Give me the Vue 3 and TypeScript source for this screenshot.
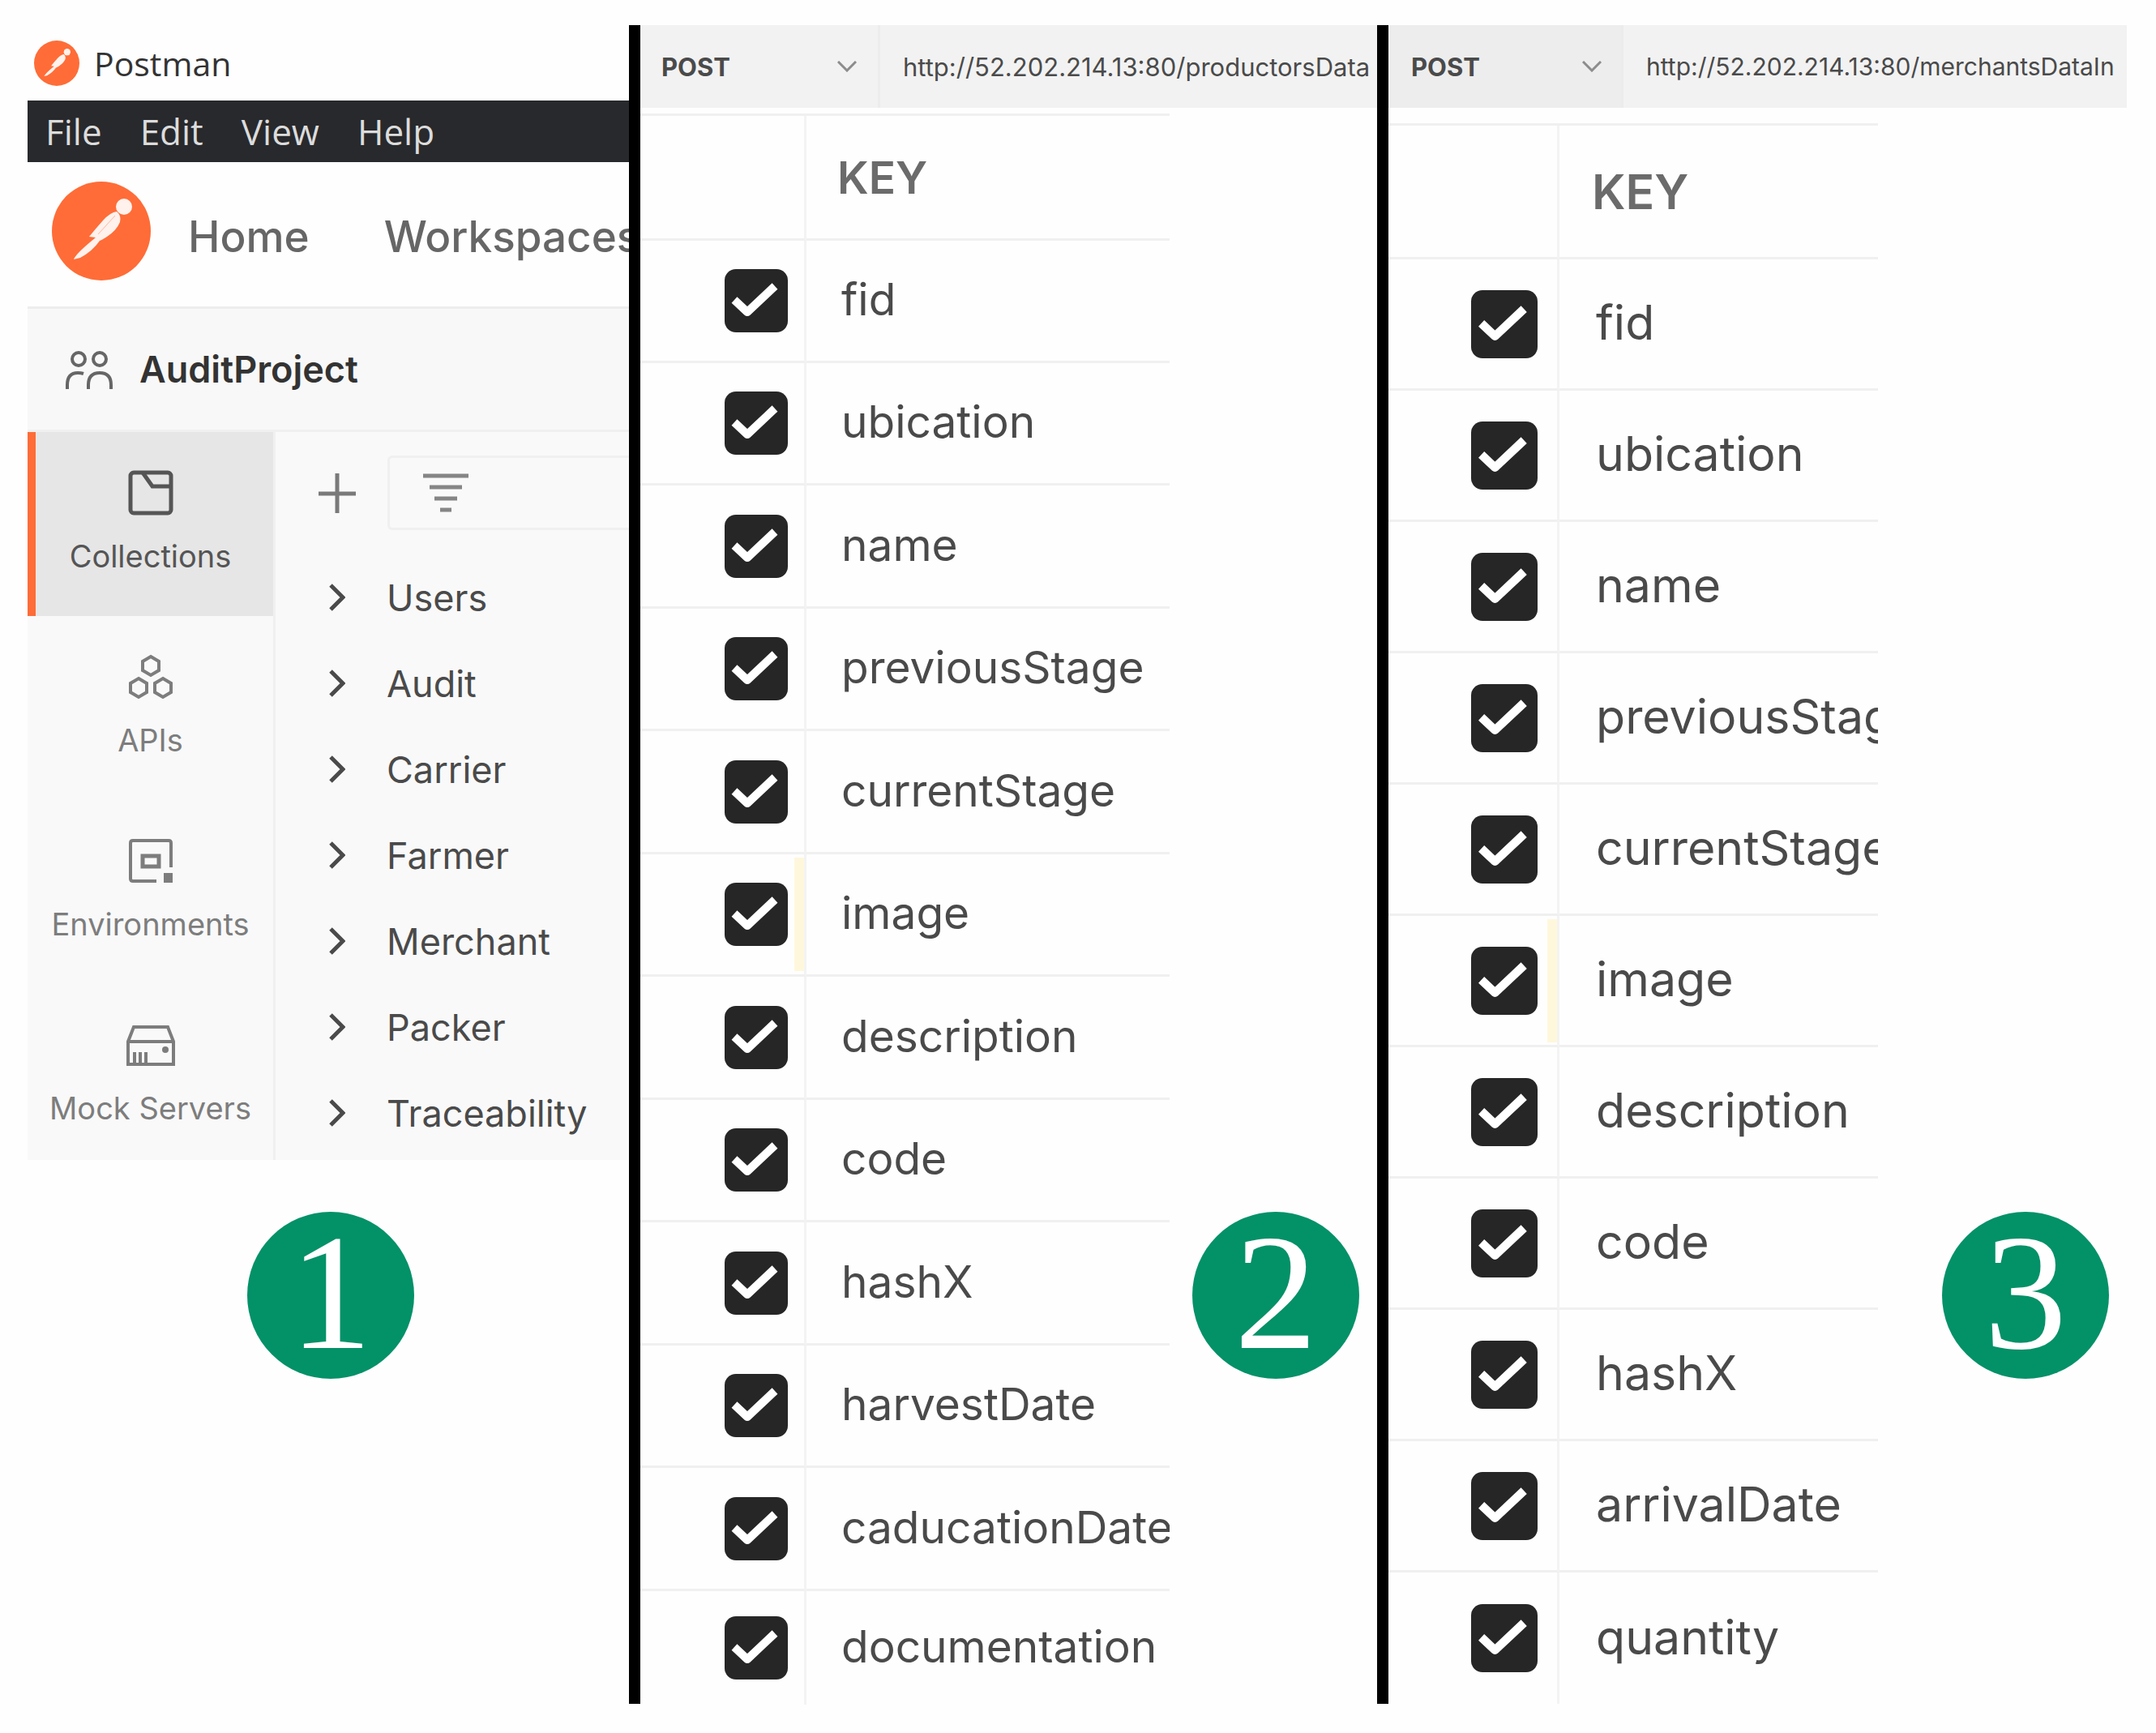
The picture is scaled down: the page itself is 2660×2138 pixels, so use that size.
<script setup lang="ts">
interface Item {
  label: string
  icon: string
}
interface Request {
  id: string
  method: string
  url: string
  step: number
  rows: string[]
}

const menus: string[] = ['File', 'Edit', 'View', 'Help']
const tabs: Item[] = [
  { label: 'Collections', icon: 'collections' },
  { label: 'APIs', icon: 'apis' },
  { label: 'Environments', icon: 'environments' },
  { label: 'Mock Servers', icon: 'mock' },
]
const collections: string[] = ['Users', 'Audit', 'Carrier', 'Farmer', 'Merchant', 'Packer', 'Traceability']
const requests: Request[] = [
  {
    id: 'productors',
    method: 'POST',
    url: 'http://52.202.214.13:80/productorsData',
    step: 2,
    rows: ['fid', 'ubication', 'name', 'previousStage', 'currentStage', 'image', 'description', 'code', 'hashX', 'harvestDate', 'caducationDate', 'documentation'],
  },
  {
    id: 'merchants',
    method: 'POST',
    url: 'http://52.202.214.13:80/merchantsDataIn',
    step: 3,
    rows: ['fid', 'ubication', 'name', 'previousStage', 'currentStage', 'image', 'description', 'code', 'hashX', 'arrivalDate', 'quantity'],
  },
]
</script>

<template>
  <main class="page">
    <section class="workspace">
      <div class="app">
        <header class="titlebar">
          <svg class="logo-small" viewBox="0 0 122 122" aria-hidden="true">
            <circle cx="61" cy="61" r="61" fill="#ff6c37" />
            <path d="M27 96Q29 90 48 74L54 69 46 68Q54 58 63 48 72 38 80 37 86 42 84 50 80 60 68 68 62 72 59 73 50 86 35 94Z" fill="#fff1ec" />
            <circle cx="89" cy="31" r="9" fill="#fff1ec" />
          </svg>
          <span>Postman</span>
        </header>
        <nav class="menubar">
          <button v-for="m in menus" :key="m" type="button">{{ m }}</button>
        </nav>
        <nav class="topnav">
          <svg class="logo" viewBox="0 0 122 122" aria-hidden="true">
            <circle cx="61" cy="61" r="61" fill="#ff6c37" />
            <path d="M27 96Q29 90 48 74L54 69 46 68Q54 58 63 48 72 38 80 37 86 42 84 50 80 60 68 68 62 72 59 73 50 86 35 94Z" fill="#fff1ec" />
            <path d="M57 65 78 42" stroke="#ffb79f" stroke-width="1" />
            <circle cx="89" cy="31" r="10" fill="#fff1ec" />
          </svg>
          <a href="#home">Home</a>
          <a href="#workspaces">Workspaces</a>
        </nav>
        <div class="project">
          <svg class="people" viewBox="0 0 60 48" fill="none" stroke="#666" stroke-width="4" aria-hidden="true">
            <circle cx="17" cy="11" r="8" />
            <circle cx="43" cy="11" r="8" />
            <path d="M3 48V43Q3 28 16 28Q20 28 23 29M29 48V43Q29 28 43 28Q57 28 57 43V48" />
          </svg>
          <strong>AuditProject</strong>
        </div>
        <div class="body">
          <nav class="tabs">
            <button v-for="(t, i) in tabs" :key="t.label" type="button" class="tab" :class="{ active: i === 0 }">
              <svg viewBox="0 0 60 56" fill="none" stroke="currentColor" stroke-width="5" aria-hidden="true">
                <template v-if="t.icon === 'collections'">
                  <rect x="5" y="3" width="50" height="50" rx="4" />
                  <path d="M20 3 32 20H55" />
                </template>
                <template v-else-if="t.icon === 'apis'">
                  <path d="M30 3 40 9V20L30 26 20 20V9ZM15 30 25 36V47L15 53 5 47V36ZM45 30 55 36V47L45 53 35 47V36Z" stroke-width="4" />
                </template>
                <template v-else-if="t.icon === 'environments'">
                  <path d="M37 53H8Q5 53 5 50V6Q5 3 8 3H52Q55 3 55 6V36" stroke-width="4" />
                  <rect x="20" y="22" width="20" height="13" />
                  <rect x="46" y="43" width="11" height="12" fill="currentColor" stroke="none" />
                </template>
                <template v-else>
                  <path d="M2 24V52H58V24L51 6H9ZM2 24H58" stroke-width="4" />
                  <path d="M10 37V52M17 37V52M24 37V52" stroke-width="4" />
                  <circle cx="48" cy="34" r="4" fill="currentColor" stroke="none" />
                </template>
              </svg>
              <span>{{ t.label }}</span>
            </button>
          </nav>
          <div class="tree">
            <div class="tools">
              <button type="button" class="add" aria-label="Add">
                <svg viewBox="0 0 48 50" stroke="#7a7a7a" stroke-width="5" aria-hidden="true"><path d="M1 26H47M24 1V50" /></svg>
              </button>
              <button type="button" class="filter" aria-label="Filter">
                <svg viewBox="0 0 56 50" stroke="#858585" stroke-width="5" aria-hidden="true"><path d="M0 4H56M8 18H48M14 32H42M21 46H35" /></svg>
              </button>
            </div>
            <ul>
              <li v-for="c in collections" :key="c">
                <button type="button">
                  <svg viewBox="0 0 20 34" fill="none" stroke="#4a4a4a" stroke-width="5" aria-hidden="true"><path d="M2 2 17 17 2 32" /></svg>
                  <span>{{ c }}</span>
                </button>
              </li>
            </ul>
          </div>
        </div>
      </div>
      <div class="badge">1</div>
    </section>

    <template v-for="r in requests" :key="r.id">
      <div class="divider"></div>
      <section class="request" :class="r.id">
        <div class="bar">
          <label class="method">
            <select aria-label="Method">
              <option>{{ r.method }}</option>
            </select>
            <svg viewBox="0 0 24 14" fill="none" stroke="#8c8c8c" stroke-width="3" aria-hidden="true"><path d="M1 1 12 12 23 1" /></svg>
          </label>
          <input class="url" type="text" :value="r.url" aria-label="Request URL" />
        </div>
        <div class="params">
          <table>
            <thead>
              <tr>
                <th></th>
                <th>KEY</th>
              </tr>
            </thead>
            <tbody>
              <tr v-for="k in r.rows" :key="k" :class="{ marked: k === 'image' }">
                <td>
                  <div class="pick">
                    <span class="check">
                      <input :id="r.id + '-' + k" type="checkbox" checked />
                      <svg viewBox="0 0 78 78" fill="none" stroke="#fff" stroke-width="10" stroke-linejoin="round" aria-hidden="true"><path d="M12 38 28 53 62 21" /></svg>
                    </span>
                  </div>
                </td>
                <td><label :for="r.id + '-' + k">{{ k }}</label></td>
              </tr>
            </tbody>
          </table>
          <div class="badge">{{ r.step }}</div>
        </div>
      </section>
    </template>
  </main>
</template>

<style>
body {
  margin: 0;
  background: #fefefe;
}
</style>

<style scoped>
* {
  box-sizing: border-box;
}
.page {
  display: grid;
  grid-template-columns: 742fr 14px 909fr 14px 911fr;
  padding: 31px 36px 36px 34px;
  font-family: Inter, sans-serif;
  color: #4a4a4a;
}
button,
select,
input {
  margin: 0;
  padding: 0;
  border: 0;
  border-radius: 0;
  background: none;
  font: inherit;
  color: inherit;
}
svg {
  display: block;
  flex: none;
}
.divider {
  background: #000;
}
.workspace {
  min-width: 0;
}
.app {
  overflow: hidden;
}
.titlebar {
  display: flex;
  align-items: center;
  gap: 18px;
  height: 93px;
  padding: 0 8px;
  font: 41px/60px "Open Sans", sans-serif;
  color: #333;
}
.logo-small {
  width: 56px;
  height: 56px;
}
.menubar {
  display: flex;
  align-items: center;
  gap: 47px;
  height: 76px;
  padding: 0 22px;
  background: #28292c;
  font: 44px/60px "Open Sans", sans-serif;
  color: #dcdcdc;
}
.topnav {
  display: flex;
  align-items: center;
  gap: 92px;
  height: 181px;
  padding: 0 30px;
  border-bottom: 3px solid #ededed;
  font-size: 53px;
  font-weight: 500;
}
.topnav a {
  padding-top: 6px;
  color: #666;
  text-decoration: none;
}
.logo {
  width: 122px;
  height: 122px;
  margin: 0 -46px 8px 0;
}
.project {
  display: flex;
  align-items: center;
  gap: 32px;
  height: 152px;
  padding: 0 46px;
  background: #f8f8f8;
  border-bottom: 3px solid #f0f0f0;
  font-size: 45px;
  color: #333;
}
.project strong {
  font-weight: 600;
}
.people {
  width: 60px;
  height: 48px;
}
.body {
  display: flex;
  height: 898px;
  background: #f9f9f9;
}
.tabs {
  flex: none;
  width: 306px;
  border-right: 3px solid #f0f0f0;
}
.tab {
  display: flex;
  flex-direction: column;
  align-items: center;
  gap: 24px;
  width: 100%;
  height: 227px;
  padding-top: 47px;
  font-size: 38px;
  line-height: 52px;
  color: #7d7d7d;
}
.tab.active {
  background: #e6e6e6;
  box-shadow: inset 10px 0 #ff6c37;
  color: #555;
}
.tab svg {
  width: 60px;
  height: 56px;
}
.tree {
  flex: 1;
  min-width: 0;
  padding-top: 29px;
}
.tools {
  display: flex;
  gap: 38px;
  padding-left: 52px;
}
.add svg {
  width: 48px;
  height: 50px;
}
.filter {
  flex: 1;
  height: 92px;
  padding-left: 41px;
  border: 3px solid #f0f0f0;
  border-right: 0;
  border-radius: 6px 0 0 6px;
}
.filter svg {
  width: 56px;
  height: 50px;
}
.tree ul {
  margin: 30px 0 0;
  padding: 0;
  list-style: none;
}
.tree li button {
  display: flex;
  align-items: center;
  gap: 51px;
  height: 106px;
  padding-left: 66px;
  font-size: 45px;
}
.tree li svg {
  width: 20px;
  height: 34px;
}
.badge {
  flex: none;
  width: 206px;
  height: 206px;
  border-radius: 50%;
  background: #039168;
  color: #fff;
  font: 204px/198px "Liberation Serif", serif;
  text-align: center;
}
.workspace .badge {
  margin: 64px auto 0 271px;
}
.request {
  min-width: 0;
}
.bar {
  display: flex;
  height: 102px;
  background: #f2f2f2;
}
.method {
  display: flex;
  align-items: center;
  flex: none;
  width: 296px;
  padding: 0 26px;
  border-right: 3px solid #ececec;
}
.merchants .method {
  width: 290px;
  padding: 0 24px 0 28px;
  background: #ededed;
}
.method select {
  flex: 1;
  appearance: none;
  font-size: 31px;
  font-weight: 700;
}
.method svg {
  width: 24px;
  height: 14px;
}
.url {
  flex: 1;
  min-width: 0;
  padding-left: 28px;
  font-size: 31px;
}
.merchants .url {
  font-size: 30px;
}
.params {
  display: flex;
  justify-content: space-between;
  height: 1969px;
  padding-right: 22px;
}
table {
  flex: none;
  width: 653px;
  height: 1px;
  margin-top: 7px;
  border-collapse: separate;
  border-spacing: 0;
  border-top: 3px solid #f0f0f0;
  table-layout: fixed;
}
th,
td {
  padding: 0;
  border-bottom: 3px solid #f0f0f0;
  overflow: hidden;
  white-space: nowrap;
}
th:first-child,
td:first-child {
  width: 205px;
  border-right: 3px solid #f3f3f3;
}
th:last-child {
  padding-left: 38px;
  text-align: left;
  font-size: 55px;
  font-weight: 600;
  color: #6b6b6b;
}
td:last-child {
  padding: 0 0 4px 43px;
  font-size: 55px;
}
thead tr {
  height: 154px;
}
tbody tr {
  height: 151px;
}
tbody tr:nth-child(odd) {
  height: 152px;
}
tbody tr:first-child {
  height: 151px;
}
tbody tr:last-child {
  height: 140px;
}
tbody tr:last-child td {
  border-bottom: 0;
}
.pick {
  display: flex;
  justify-content: flex-end;
  align-items: center;
  height: 140px;
  padding-right: 20px;
}
.marked .pick {
  box-shadow: inset -12px 0 #fff7dc;
}
.check {
  display: grid;
  width: 78px;
  height: 78px;
}
.check input {
  grid-area: 1 / 1;
  appearance: none;
  border-radius: 14px;
  background: #262626;
}
.check svg {
  grid-area: 1 / 1;
  width: 100%;
  height: 100%;
  pointer-events: none;
}
.params .badge {
  margin-top: 1362px;
}
.merchants table {
  width: 604px;
  margin-top: 19px;
}
.merchants th:first-child,
.merchants td:first-child {
  width: 211px;
}
.merchants th:last-child {
  padding-left: 40px;
  font-size: 59px;
}
.merchants td:last-child {
  padding-left: 45px;
  font-size: 59px;
}
.merchants thead tr {
  height: 165px;
}
.merchants tbody tr {
  height: 162px;
}
.merchants .check {
  width: 82px;
  height: 84px;
}
.merchants .pick {
  height: 152px;
  padding-right: 24px;
}
</style>
